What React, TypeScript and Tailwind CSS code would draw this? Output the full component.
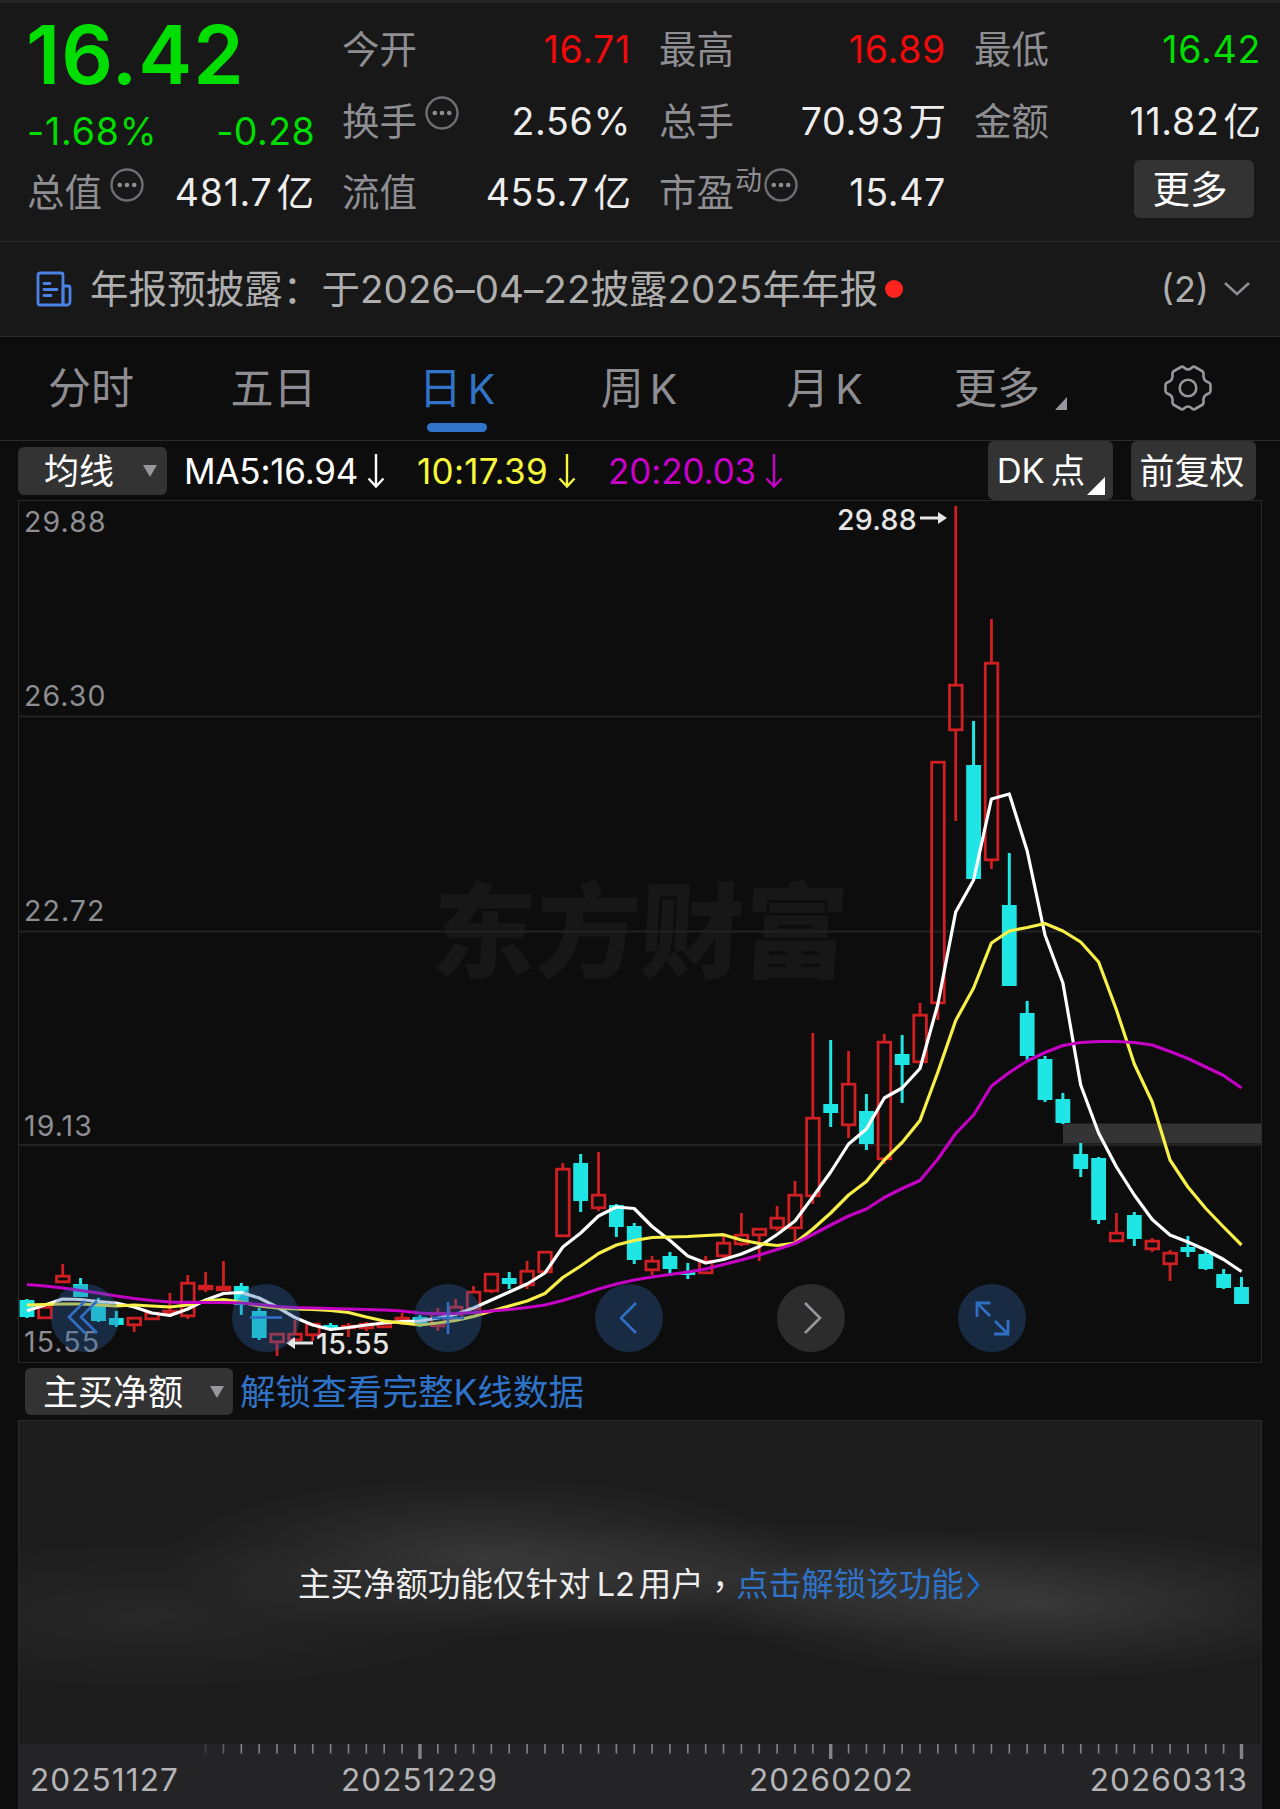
import React from 'react';

type Candle = [kind: 'u' | 'd', high: number, top: number, bottom: number, low: number];

const STEP = 17.86;
const FIRST_X = 27;
const xAt = (i: number) => FIRST_X + i * STEP;

// u = close above open (hollow red), d = close below open (solid cyan)
const CANDLES: Candle[] = [
  ['d', 1299, 1300, 1317, 1318],
  ['u', 1306, 1306, 1319, 1319],
  ['u', 1264, 1275, 1283, 1283],
  ['d', 1278, 1284, 1297, 1297],
  ['d', 1298, 1302, 1321, 1322],
  ['d', 1311, 1318, 1325, 1327],
  ['u', 1317, 1317, 1326, 1332],
  ['u', 1312, 1312, 1320, 1320],
  ['u', 1293, 1310, 1314, 1314],
  ['u', 1275, 1282, 1317, 1319],
  ['u', 1272, 1285, 1290, 1292],
  ['u', 1261, 1286, 1291, 1291],
  ['d', 1283, 1286, 1305, 1315],
  ['d', 1308, 1311, 1338, 1340],
  ['u', 1333, 1333, 1343, 1356],
  ['u', 1320, 1333, 1341, 1341],
  ['u', 1323, 1323, 1336, 1341],
  ['d', 1323, 1325, 1329, 1331],
  ['u', 1323, 1325, 1329, 1337],
  ['u', 1322, 1323, 1329, 1331],
  ['u', 1322, 1322, 1328, 1328],
  ['u', 1313, 1317, 1321, 1325],
  ['d', 1315, 1317, 1324, 1327],
  ['u', 1308, 1312, 1327, 1331],
  ['u', 1299, 1306, 1320, 1320],
  ['u', 1286, 1291, 1310, 1310],
  ['u', 1273, 1273, 1292, 1293],
  ['d', 1272, 1278, 1284, 1289],
  ['u', 1261, 1270, 1286, 1289],
  ['u', 1251, 1251, 1273, 1273],
  ['u', 1163, 1168, 1237, 1237],
  ['d', 1154, 1163, 1201, 1212],
  ['u', 1152, 1194, 1209, 1211],
  ['d', 1204, 1205, 1227, 1237],
  ['d', 1223, 1226, 1260, 1264],
  ['u', 1256, 1260, 1271, 1275],
  ['d', 1252, 1256, 1269, 1276],
  ['d', 1263, 1272, 1275, 1279],
  ['u', 1256, 1260, 1274, 1274],
  ['u', 1236, 1242, 1257, 1258],
  ['u', 1213, 1234, 1245, 1246],
  ['u', 1228, 1228, 1236, 1261],
  ['u', 1206, 1217, 1229, 1231],
  ['u', 1181, 1194, 1229, 1243],
  ['u', 1033, 1117, 1197, 1204],
  ['d', 1040, 1104, 1113, 1127],
  ['u', 1051, 1083, 1126, 1138],
  ['d', 1094, 1111, 1144, 1150],
  ['u', 1034, 1041, 1160, 1164],
  ['d', 1035, 1054, 1065, 1103],
  ['u', 1003, 1014, 1063, 1063],
  ['u', 761, 761, 1004, 1020],
  ['u', 506, 684, 731, 821],
  ['d', 721, 765, 879, 880],
  ['u', 619, 662, 861, 869],
  ['d', 853, 905, 986, 986],
  ['d', 1001, 1013, 1056, 1061],
  ['d', 1056, 1059, 1100, 1102],
  ['d', 1093, 1099, 1123, 1124],
  ['d', 1143, 1154, 1169, 1177],
  ['d', 1157, 1158, 1220, 1224],
  ['u', 1213, 1232, 1242, 1242],
  ['d', 1212, 1215, 1239, 1246],
  ['u', 1238, 1240, 1250, 1252],
  ['u', 1250, 1252, 1265, 1281],
  ['d', 1236, 1247, 1252, 1257],
  ['d', 1251, 1254, 1269, 1270],
  ['d', 1269, 1274, 1288, 1289],
  ['d', 1277, 1287, 1304, 1304],
];

const MA5 = [
  1310.7, 1305, 1299, 1299.5, 1301.5, 1303, 1307, 1313, 1315.5, 1309, 1300, 1293.5, 1292.5, 1298, 1307, 1317.5, 1325,
  1329.5, 1327.5, 1325, 1323, 1321.5, 1321, 1318, 1314.5, 1308, 1300, 1292, 1284, 1273, 1247, 1233, 1216, 1207, 1208.5,
  1226.5, 1240.5, 1256, 1263, 1259.5, 1254, 1246.5, 1234.5, 1221, 1197, 1172, 1144, 1129, 1098, 1088, 1068.5, 1004, 912,
  880, 799, 794, 851, 935, 983, 1085, 1133, 1167, 1195, 1219.5, 1235, 1242, 1250, 1259.5, 1271.5,
];

const MA10 = [
  1305, 1304.5, 1304, 1304, 1305, 1306, 1305, 1306, 1307, 1305, 1301, 1299.5, 1302, 1306, 1308, 1309, 1309.5, 1310.5,
  1312.5, 1317, 1321, 1323, 1325, 1323, 1320.5, 1316.5, 1311, 1306, 1301, 1293.5, 1277.5, 1266, 1253.5, 1245, 1240.5,
  1237.5, 1237, 1236.5, 1235.5, 1234.7, 1240, 1243.5, 1245.5, 1243, 1229, 1213, 1195, 1181.5, 1160, 1142.5, 1120.5,
  1072, 1020.5, 988, 943, 931, 927.5, 923.5, 931, 942, 962, 1010, 1064, 1102, 1160, 1187, 1208.5, 1227, 1245,
];

const MA20 = [
  1284.5, 1286, 1288, 1290.5, 1293, 1296, 1298.5, 1300.5, 1302, 1302.3, 1302.5, 1302.5, 1303, 1304.5, 1306.5, 1307.5,
  1308, 1308.5, 1309, 1309.5, 1310, 1311, 1313, 1314, 1313.5, 1312.5, 1311, 1309.5, 1307.5, 1305, 1300.5, 1295, 1289,
  1284, 1280, 1277, 1274.5, 1272, 1269, 1264.5, 1260, 1255, 1249.5, 1243.5, 1234.5, 1225, 1216, 1209, 1197.5, 1188.5,
  1180.5, 1159, 1133.5, 1115, 1086, 1072.5, 1061, 1052.5, 1045.5, 1042.5, 1041.5, 1041.5, 1042.5, 1045, 1051.5,
  1058.5, 1067, 1075.5, 1088,
];

const toPoints = (values: number[]) => values.map((y, i) => `${xAt(i).toFixed(1)},${y}`).join(' ');

const InfoDots = ({ className = '' }: { className?: string }) => (
  <svg viewBox="0 0 34 34" className={`h-[34px] w-[34px] shrink-0 ${className}`} fill="none">
    <circle cx="17" cy="17" r="15.5" stroke="#6f6f73" strokeWidth="2.4" />
    <circle cx="9.8" cy="17" r="2.3" fill="#8e8e93" />
    <circle cx="17" cy="17" r="2.3" fill="#8e8e93" />
    <circle cx="24.2" cy="17" r="2.3" fill="#8e8e93" />
  </svg>
);

interface StatProps {
  label: string;
  value: string;
  unit?: string;
  color?: string;
  sup?: string;
  info?: boolean;
}

const Stat: React.FC<StatProps> = ({ label, value, unit, color = 'text-[#ededed]', sup, info }) => (
  <div className="flex h-[71.5px] items-center justify-between leading-none">
    <div className="flex items-center text-[#8e8e93]">
      <span className="-ml-px">{label}</span>
      {sup && <span className="ml-px -translate-y-3 text-[27px]">{sup}</span>}
      {info && <InfoDots className={sup ? 'ml-0.5 -translate-y-2' : 'ml-2 -translate-y-2'} />}
    </div>
    <div className={`flex items-center ${color}`}>
      <span className={`tracking-[0.7px] ${unit ? '' : '-mr-px'}`}>{value}</span>
      {unit && <span className="-mr-px ml-1">{unit}</span>}
    </div>
  </div>
);

const DownTriangle = () => (
  <svg viewBox="0 0 14 12" className="h-3 w-3.5" fill="#98989c">
    <path d="M0 0h14L7 12z" />
  </svg>
);

const DownArrow = () => (
  <svg viewBox="0 0 18 36" className="h-9 w-[18px]" fill="none" stroke="currentColor" strokeWidth="2.4">
    <path d="M9 1v32M1.5 25.5 9 33.5l7.5-8" />
  </svg>
);

const Header = () => (
  <header className="h-[241px] border-t-[3px] border-[#242426] bg-[#181818] text-[37.5px]">
    <div className="grid grid-cols-[285px_287px_285px_285px] gap-x-[30px] pl-7">
      <div className="pt-[11px] text-[#00dd00]">
        <div className="-ml-0.5 flex h-[82px] items-center text-[81px] leading-none font-semibold tracking-[1px]">
          16.42
        </div>
        <div className="flex h-[71px] items-center justify-between leading-none">
          <span className="-ml-px tracking-[0.8px]">-1.68%</span>
          <span className="-mr-0.5 tracking-[0.4px]">-0.28</span>
        </div>
        <div className="-mt-[10px]">
          <Stat label="总值" value="481.7" unit="亿" info />
        </div>
      </div>
      <div className="pt-[11px]">
        <Stat label="今开" value="16.71" color="text-[#f00a0a]" />
        <Stat label="换手" value="2.56%" info />
        <Stat label="流值" value="455.7" unit="亿" />
      </div>
      <div className="pt-[11px]">
        <Stat label="最高" value="16.89" color="text-[#f00a0a]" />
        <Stat label="总手" value="70.93" unit="万" />
        <Stat label="市盈" value="15.47" sup="动" info />
      </div>
      <div className="pt-[11px]">
        <Stat label="最低" value="16.42" color="text-[#00dd00]" />
        <Stat label="金额" value="11.82" unit="亿" />
        <div className="flex justify-end pt-[3px] pr-1.5">
          <button className="h-[58px] w-[120px] rounded-md bg-[#333333] pt-0.5 pr-2 leading-none text-white">更多</button>
        </div>
      </div>
    </div>
  </header>
);

const NewsBar = () => (
  <div className="flex h-24 items-center border-y border-[#2a2a2b] bg-[#181818] pl-9 text-[38.5px] leading-none text-[#aeaeae]">
    <svg viewBox="0 0 36 36" className="h-9 w-9" fill="none" stroke="#4a82e8" strokeWidth="2.8" strokeLinejoin="round">
      <path d="M27 32V4a2 2 0 0 0-2-2H4a2 2 0 0 0-2 2v28a2 2 0 0 0 2 2h27a3 3 0 0 0 3-3V17a2 2 0 0 0-2-2h-5" />
      <path d="M27 34V15" />
      <path d="M8 12.500h6M8 18.500h13M8 24.500h7" strokeLinecap="round" />
    </svg>
    <span className="ml-[18px] tracking-[0.07px] whitespace-nowrap">年报预披露：于2026–04–22披露2025年年报</span>
    <span className="ml-[7px] h-[18px] w-[18px] rounded-full bg-[#ff2420]" />
    <span className="ml-auto text-[36px]">(2)</span>
    <svg viewBox="0 0 26 14" className="mr-[30px] ml-[15px] h-3.5 w-[26px]" fill="none" stroke="#8e8e93" strokeWidth="2.6">
      <path d="M1 1l12 11L25 1" />
    </svg>
  </div>
);

const Tabs = () => (
  <nav className="grid h-[104px] grid-cols-[182px_183px_192px_164px_207px_138px_214px] items-center border-b border-[#2a2a2b] text-center text-[43px] leading-none text-[#8e8e92]">
    <span>分时</span>
    <span>五日</span>
    <span className="relative pr-2 text-[#3173c7]">
      日<span className="ml-1.5 text-[41px]">K</span>
      <span className="absolute top-[56px] left-[62px] h-[9px] w-[60px] rounded-full bg-[#3173c7]" />
    </span>
    <span>
      周<span className="ml-1.5 text-[41px]">K</span>
    </span>
    <span>
      月<span className="ml-1.5 text-[41px]">K</span>
    </span>
    <span className="relative">
      更多
      <svg viewBox="0 0 12 13" className="absolute top-[30px] left-[127px] h-[13px] w-3" fill="#98989c">
        <path d="M12 0v13H0z" />
      </svg>
    </span>
    <span className="flex -translate-y-px justify-center pl-[30px]">
      <svg viewBox="0 0 48 46" className="h-[46px] w-12" fill="none" stroke="#98989c" strokeWidth="2.600" strokeLinejoin="round">
        <path d="M17 2Q19 1 20.500 3Q24 6 27.500 3Q29 1 31 2L38 6Q40 7 39.500 10Q39 15 43.500 17Q46.500 18 46.500 20V26Q46.500 28 43.500 29Q39 31 39.500 36Q40 39 38 40L31 44Q29 45 27.500 43Q24 40 20.500 43Q19 45 17 44L10 40Q8 39 8.500 36Q9 31 4.500 29Q1.500 28 1.500 26V20Q1.500 18 4.500 17Q9 15 8.500 10Q8 7 10 6Z" />
        <circle cx="24" cy="23" r="8.300" />
      </svg>
    </span>
  </nav>
);

const IndicatorBar = () => (
  <div className="flex h-[59px] items-center pl-[18px] text-[35px] leading-none">
    <button className="flex h-12 w-[149px] items-center justify-between rounded-md bg-[#333333] pr-[10px] pl-[26px] text-white">
      <span className="pt-0.5">均线</span>
      <DownTriangle />
    </button>
    <div className="ml-[17px] flex w-[233px] items-center text-white">
      <span className="w-[183px] pt-0.5 tracking-[-0.2px]">MA5:16.94</span>
      <DownArrow />
    </div>
    <div className="flex w-[191px] items-center text-[#f8f83c]">
      <span className="w-[141px] pt-0.5 tracking-[0.3px]">10:17.39</span>
      <DownArrow />
    </div>
    <div className="flex items-center text-[#c800c8]">
      <span className="w-[157px] pt-0.5 tracking-[-0.1px]">20:20.03</span>
      <DownArrow />
    </div>
    <button className="relative ml-auto h-[59px] w-[125px] rounded-md bg-[#333333] pt-0.5 pr-[19px] text-[34.5px] whitespace-nowrap text-white">
      DK<span className="ml-1.5">点</span>
      <svg viewBox="0 0 18 18" className="absolute right-2 bottom-[5px] h-[18px] w-[18px]" fill="#fff">
        <path d="M18 0v18H0z" />
      </svg>
    </button>
    <button className="mr-6 ml-[18px] h-[59px] w-[125px] rounded-md bg-[#333333] pt-0.5 pr-[3px] text-[35px] text-white">
      前复权
    </button>
  </div>
);

const CandleShape = ({ candle, index }: { candle: Candle; index: number }) => {
  const [kind, high, top, bottom, low] = candle;
  const x = xAt(index);
  if (kind === 'd') {
    return (
      <g fill="#1fe5e5">
        <rect x={x - 1.5} y={high} width={3} height={low - high} />
        <rect x={x - 7.4} y={top} width={14.8} height={bottom - top} />
      </g>
    );
  }
  return (
    <g stroke="#cf1f22" strokeWidth={2.8} fill="none">
      {top > high && <path d={`M${x} ${high}V${top}`} />}
      {low > bottom && <path d={`M${x} ${bottom}V${low}`} />}
      <rect x={x - 6.2} y={top + 1.2} width={12.6} height={Math.max(bottom - top - 2.4, 1.5)} />
    </g>
  );
};

const AXIS = [
  { label: '29.88', y: 532 },
  { label: '26.30', y: 706 },
  { label: '22.72', y: 921 },
  { label: '19.13', y: 1136 },
  { label: '15.55', y: 1352 },
];

const ChartButton = ({ muted, children }: { muted?: boolean; children: React.ReactNode }) => (
  <button
    className={`flex h-[68px] w-[68px] items-center justify-center rounded-full ${
      muted ? 'bg-[#666668]/35' : 'bg-[#2f65aa]/35'
    }`}
  >
    <svg viewBox="0 0 68 68" className="h-[68px] w-[68px]" fill="none" stroke={muted ? '#98989c' : '#2f6fc4'} strokeWidth="2.6">
      {children}
    </svg>
  </button>
);

const KLineChart = () => (
  <div className="relative ml-[18px] h-[863px] w-[1244px] border border-[#2a2a2b]">
    <svg viewBox="19 501 1242 861" className="block h-[861px] w-[1242px]" fontFamily="Inter, sans-serif">
      <text
        x="0"
        y="0"
        transform="translate(430 970) skewX(-3)"
        fontFamily="'Noto Sans CJK SC', sans-serif"
        fontWeight="900"
        fontSize="104"
        fill="#171717"
      >
        东方财富
      </text>
      <path d="M18 716.500H1262M18 931.500H1262M18 1145H1262" stroke="#222223" strokeWidth="2" />
      <rect x="1063" y="1123.500" width="199" height="20" fill="#343434" />
      <g fill="#8e8e93" fontSize="28.500" letterSpacing="1.1">
        {AXIS.map(({ label, y }) => (
          <text key={label} x="24" y={y}>
            {label}
          </text>
        ))}
      </g>
      {CANDLES.map((candle, i) => (
        <CandleShape key={i} candle={candle} index={i} />
      ))}
      <g fill="none" strokeLinejoin="round" strokeWidth="3.200">
        <polyline points={toPoints(MA5)} stroke="#fff" />
        <polyline points={toPoints(MA10)} stroke="#f8f048" />
        <polyline points={toPoints(MA20)} stroke="#c400c4" />
      </g>
      <g fill="#e6e6e6" fontSize="28.500" fontWeight="500" letterSpacing="0.3">
        <text x="837" y="529.500">29.88</text>
        <path d="M920 516.500h18v-4.500l9 6-9 6v-4.500h-18z" />
        <text x="316" y="1354">15.55</text>
        <path d="M313 1341.500h-18v-4.500l-9 6 9 6v-4.500h18z" />
      </g>
    </svg>
    <div className="absolute top-[782.5px] left-8 flex gap-[113.4px]">
      <ChartButton>
        <path d="M34 17 18 33l16 16M46 17 30 33l16 16" />
      </ChartButton>
      <ChartButton>
        <path d="M18 33.500H50" />
      </ChartButton>
      <ChartButton>
        <path d="M18 34H50M34 18V50" />
      </ChartButton>
      <ChartButton>
        <path d="M41 19 26 34l15 15" />
      </ChartButton>
      <ChartButton muted>
        <path d="M28 19 43 34 28 49" />
      </ChartButton>
      <ChartButton>
        <path d="M32.500 19H19v14M19 19l13 13M36 50H50V36M50 50 37 37" strokeWidth="2.800" />
      </ChartButton>
    </div>
  </div>
);

const MAJOR_TICKS = [22, 45, 68];

const SubChart = () => (
  <section>
    <div className="flex h-[57px] items-center pl-[25px] text-[35px] leading-none">
      <button className="flex h-[47px] w-[208px] items-center justify-between rounded-md bg-[#333333] pr-[9px] pl-[18px] text-white">
        <span className="pt-0.5">主买净额</span>
        <DownTriangle />
      </button>
      <span className="ml-[7px] pt-0.5 text-[35.6px] text-[#2f73c8]">解锁查看完整K线数据</span>
    </div>
    <div className="ml-[18px] h-[389px] w-[1244px] border-x border-t border-[#2a2a2b] bg-[#242427]">
      <div className="flex h-[323px] items-start justify-center bg-[#1c1c1c] bg-[radial-gradient(320px_82px_at_462px_136px,rgba(255,255,255,0.12),rgba(255,255,255,0.055)_50%,transparent),radial-gradient(330px_78px_at_1020px_183px,rgba(255,255,255,0.125),rgba(255,255,255,0.06)_50%,transparent),radial-gradient(330px_60px_at_740px_158px,rgba(255,255,255,0.08),transparent),radial-gradient(380px_80px_at_130px_195px,rgba(255,255,255,0.05),transparent)] pt-[148px] pr-0.5 text-[32.5px] leading-none whitespace-nowrap">
        <span className="text-[#ededed]">主买净额功能仅针对</span>
        <span className="ml-1.5 text-[#ededed]">L2</span>
        <span className="ml-1 text-[#ededed]">用户</span>
        <span className="font-['Noto_Sans_CJK_TC',sans-serif] text-[#ededed]">，</span>
        <span className="text-[#2f73c8]">点击解锁该功能</span>
        <svg viewBox="0 0 14 26" className="mt-[3px] ml-0.5 h-[26px] w-3.5" fill="none" stroke="#1a6fd6" strokeWidth="2.600">
          <path d="M2 1l10 12L2 25" />
        </svg>
      </div>
      <svg viewBox="19 1744 1242 16" className="block h-4 w-[1242px]">
        {CANDLES.map((_, i) => {
          if (i < 10) return null;
          const major = MAJOR_TICKS.includes(i);
          return (
            <rect
              key={i}
              x={xAt(i) - (major ? 1.7 : 0.8)}
              y={1744}
              width={major ? 3.4 : 1.6}
              height={major ? 15 : 9.5}
              fill="#8e8e93"
              opacity={i === 10 ? 0.25 : i === 11 ? 0.6 : 0.9}
            />
          );
        })}
      </svg>
      <div className="flex justify-between pt-1 pr-[13px] pl-[11px] text-[31.5px] leading-[32px] tracking-[1.1px] text-[#b5b5b8]">
        <span className="w-[311px]">20251127</span>
        <span className="w-[408px]">20251229</span>
        <span className="flex-1">20260202</span>
        <span>20260313</span>
      </div>
    </div>
  </section>
);

export default function App() {
  return (
    <main className="h-[1809px] w-[1280px] overflow-hidden bg-[#0d0d0d] font-['Inter','Noto_Sans_CJK_SC',sans-serif]">
      <Header />
      <NewsBar />
      <Tabs />
      <IndicatorBar />
      <KLineChart />
      <SubChart />
    </main>
  );
}
